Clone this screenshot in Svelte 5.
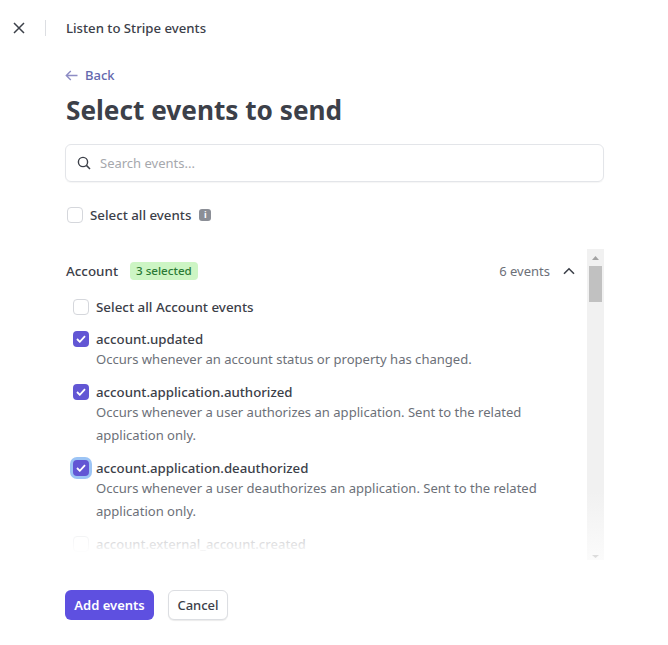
<script>
  const events = [
    { name: 'account.updated', desc: 'Occurs whenever an account status or property has changed.' },
    { name: 'account.application.authorized', desc: 'Occurs whenever a user authorizes an application. Sent to the related application only.' },
    { name: 'account.application.deauthorized', desc: 'Occurs whenever a user deauthorizes an application. Sent to the related application only.', focus: true }
  ];
</script>

<div class="page">
  <header class="topbar">
    <svg class="close" width="12" height="12" viewBox="0 0 12 12"><path d="M1 1l10 10M11 1L1 11" stroke="#3c4049" stroke-width="1.5" fill="none" /></svg>
    <span class="divider"></span>
    <span class="topbar-title">Listen to Stripe events</span>
  </header>

  <main class="content">
    <a class="back" href="#back">
      <svg width="13" height="11" viewBox="0 0 13 11"><path d="M12.5 5.5H1.5M5.8 1L1.3 5.5l4.5 4.5" stroke="#8d8cc4" stroke-width="1.4" fill="none" /></svg>
      Back
    </a>
    <h1>Select events to send</h1>

    <div class="search">
      <svg width="14" height="14" viewBox="0 0 14 14"><circle cx="6" cy="6" r="4.6" stroke="#3c4049" stroke-width="1.4" fill="none" /><path d="M9.4 9.4L13 13" stroke="#3c4049" stroke-width="1.5" /></svg>
      <span>Search events...</span>
    </div>

    <div class="select-all">
      <span class="box"></span>
      <span>Select all events</span>
      <span class="info">i</span>
    </div>

    <section class="list">
      <div class="list-body">
        <div class="group-head">
          <span class="group-name">Account</span>
          <span class="badge">3 selected</span>
          <span class="count">6 events</span>
          <svg width="12" height="8" viewBox="0 0 12 8"><path d="M1 6.8l5-5 5 5" stroke="#3c4049" stroke-width="1.6" fill="none" /></svg>
        </div>

        <div class="row all-row">
          <span class="box"></span>
          <span class="event-name">Select all Account events</span>
        </div>

        {#each events as ev}
          <div class="row">
            <span class="box checked" class:focus={ev.focus}>
              <svg width="10" height="8" viewBox="0 0 10 8"><path d="M1 4l2.8 2.8L9 1.2" stroke="#fff" stroke-width="1.8" fill="none" /></svg>
            </span>
            <div>
              <div class="event-name">{ev.name}</div>
              <p>{ev.desc}</p>
            </div>
          </div>
        {/each}

        <div class="row">
          <span class="box"></span>
          <span class="event-name ext">account.external_account.created</span>
        </div>
      </div>
      <div class="fade"></div>
      <div class="scrollbar">
        <svg width="7" height="4" viewBox="0 0 7 4"><path d="M3.5 0L7 4H0z" fill="#a3a3a3" /></svg>
        <span class="thumb"></span>
        <svg class="down" width="7" height="3" viewBox="0 0 7 3"><path d="M0 0h7L3.5 3z" fill="#dcdcdc" /></svg>
      </div>
    </section>

    <div class="actions">
      <button class="primary">Add events</button>
      <button class="secondary">Cancel</button>
    </div>
  </main>
</div>

<style>
  :global(body) {
    background: #fff;
  }

  .page {
    width: 668px;
    height: 645px;
    overflow: hidden;
    font-family: "Noto Sans", "Open Sans", sans-serif;
    color: #3c4049;
    font-size: 13px;
  }

  .topbar {
    display: flex;
    align-items: center;
    height: 16px;
    padding: 20px 0 0 13px;
  }

  .divider {
    width: 1px;
    height: 16px;
    background: #dcdee2;
    margin: 0 20px 0 20px;
  }

  .topbar-title {
    font-weight: 500;
    font-size: 13.2px;
  }

  .content {
    padding: 29px 64px 0 65px;
  }

  .back {
    display: flex;
    align-items: center;
    gap: 7px;
    height: 20px;
    color: #6468ae;
    font-weight: 500;
    text-decoration: none;
  }

  h1 {
    margin: 7px 0 0 1px;
    font-size: 26.2px;
    line-height: 36px;
    font-weight: 700;
    color: #3c4049;
  }

  .search {
    display: flex;
    align-items: center;
    gap: 9px;
    height: 36px;
    margin-top: 16px;
    padding-left: 11px;
    border: 1px solid #e3e5e9;
    border-radius: 6px;
    color: #a6a8ad;
    box-shadow: 0 1px 1px rgba(0, 0, 0, 0.04);
  }

  .select-all {
    display: flex;
    align-items: center;
    gap: 7px;
    height: 18px;
    margin: 24px 0 0 2px;
    font-weight: 500;
    font-size: 13.3px;
  }

  .box {
    flex: none;
    display: flex;
    align-items: center;
    justify-content: center;
    width: 14px;
    height: 14px;
    border: 1px solid #d5d7dc;
    border-radius: 4px;
    background: #fff;
  }

  .row .box {
    margin-top: 1px;
  }

  .box.checked {
    width: 16px;
    height: 16px;
    border: none;
    background: #6256d4;
  }

  .box.focus {
    box-shadow: 0 0 0 3px #9cc4f5;
  }

  .info {
    width: 12px;
    height: 12px;
    margin-left: 1px;
    border-radius: 3px;
    background: #8b8e96;
    color: #fff;
    font-size: 9px;
    line-height: 12px;
    font-weight: 700;
    text-align: center;
  }

  .list {
    position: relative;
    height: 311px;
    margin-top: 25px;
    overflow: hidden;
  }

  .list-body {
    padding-right: 28px;
  }

  .group-head {
    display: flex;
    align-items: center;
    height: 20px;
    margin-top: 12px;
    padding-left: 1px;
  }

  .group-name {
    font-weight: 500;
    font-size: 13.4px;
  }

  .badge {
    margin-left: 12px;
    padding: 0 6px;
    height: 18px;
    line-height: 18px;
    border-radius: 4px;
    background: #cdf5c4;
    color: #2a7a35;
    font-size: 11.6px;
    font-weight: 500;
  }

  .count {
    margin-left: auto;
    margin-right: 13px;
    color: #6c7078;
  }

  .group-head svg {
    margin-right: 1px;
  }

  .row {
    display: flex;
    align-items: flex-start;
    gap: 7px;
    padding-left: 8px;
    margin-top: 12px;
  }

  .all-row {
    margin-top: 17px;
    margin-bottom: 14px;
  }

  .event-name {
    font-weight: 500;
    font-size: 13.25px;
    line-height: 18px;
  }

  .event-name.ext {
    font-size: 13px;
  }

  .all-row .event-name {
    font-size: 13.4px;
  }

  .row p {
    margin: 0;
    color: #6c7078;
    font-size: 13.05px;
    line-height: 23px;
  }

  .fade {
    position: absolute;
    left: 0;
    right: 17px;
    bottom: 0;
    height: 38px;
    background: linear-gradient(rgba(255, 255, 255, 0.5), #fff 85%);
  }

  .scrollbar {
    position: absolute;
    top: 0;
    right: 0;
    bottom: 0;
    width: 17px;
    display: flex;
    flex-direction: column;
    align-items: center;
    background: linear-gradient(#f1f1f1 78%, #fbfbfb);
  }

  .scrollbar svg {
    margin-top: 7px;
  }

  .scrollbar svg.down {
    margin-top: auto;
    margin-bottom: 2px;
  }

  .thumb {
    width: 13px;
    height: 36px;
    margin-top: 6px;
    background: #c1c1c1;
  }

  .actions {
    display: flex;
    gap: 14px;
    margin-top: 30px;
  }

  button {
    height: 30px;
    border-radius: 6px;
    font-family: inherit;
    font-size: 13px;
    font-weight: 500;
  }

  .primary {
    width: 89px;
    border: none;
    background: #5e50e0;
    color: #fff;
    font-weight: 600;
  }

  .secondary {
    width: 60px;
    border: 1px solid #dcdee2;
    background: #fff;
    color: #3c4049;
    box-shadow: 0 1px 1px rgba(0, 0, 0, 0.08);
  }
</style>
